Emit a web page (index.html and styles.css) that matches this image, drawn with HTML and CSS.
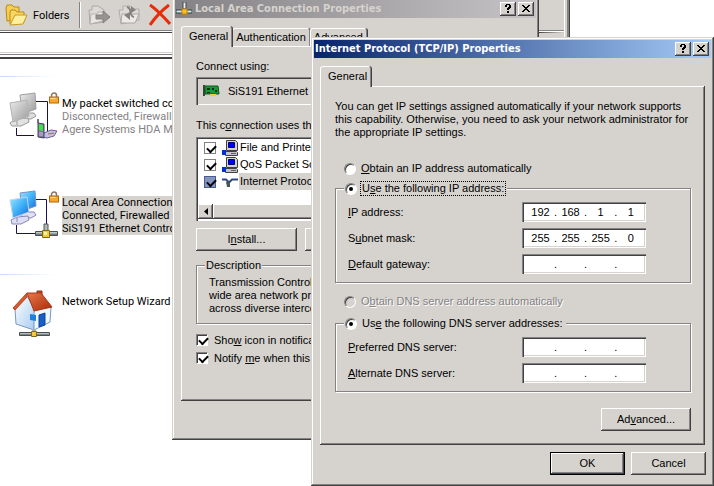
FILE: index.html
```
<!DOCTYPE html>
<html lang="en">
	<head>
		<meta charset="UTF-8">
		<meta name="viewport" content="width=device-width, initial-scale=1.0">
		<title>Network Connections</title>
		<link rel="stylesheet" href="styles.css">
	</head>
	<body>
		<svg class="defs" aria-hidden="true">
			<defs>
				<linearGradient id="screen" x1="0" y1="0" x2="1" y2="1">
					<stop offset="0" stop-color="#9be4ff"/>
					<stop offset=".5" stop-color="#3fb2f8"/>
					<stop offset="1" stop-color="#1467dc"/>
				</linearGradient>
				<linearGradient id="screen-off" x1="0" y1="0" x2="1" y2="1">
					<stop offset="0" stop-color="#ececec"/>
					<stop offset="1" stop-color="#9a9a9a"/>
				</linearGradient>
				<linearGradient id="pipe" x1="0" y1="0" x2="0" y2="1">
					<stop offset="0" stop-color="#e8eef0"/>
					<stop offset="1" stop-color="#4a5456"/>
				</linearGradient>
				<linearGradient id="roof" x1="0" y1="0" x2="1" y2="1">
					<stop offset="0" stop-color="#e87848"/>
					<stop offset="1" stop-color="#a82808"/>
				</linearGradient>
				<linearGradient id="wall" x1="0" y1="0" x2="1" y2="1">
					<stop offset="0" stop-color="#ffffff"/>
					<stop offset="1" stop-color="#a8ccf0"/>
				</linearGradient>
				<symbol id="padlock" viewBox="0 0 10 12">
					<path d="M2.500 6V3.500a2.500 2.500 0 0 1 5 0V6" fill="none" stroke="#8a7a60" stroke-width="1.500"/>
					<rect x=".5" y="5" width="9" height="6" fill="#f8a830" stroke="#b06810"/>
					<path d="M1.500 6.500h5" stroke="#ffe0a0"/>
				</symbol>
				<symbol id="computer" viewBox="0 0 16 16">
					<path d="M4.500 .5h9l2 2v8h-11z" fill="#d6d3ce" stroke="#404040"/>
					<path d="M6.500 2.500h6v5h-6z" fill="#0000f8" stroke="#000080"/>
					<path d="M3.500 11.500h11l1 1v3h-12z" fill="#c6c3c6" stroke="#404040"/>
					<path d="M9 13.500h5" stroke="#606060"/>
					<path d="M0 10h4v5H0z" fill="#0030d0"/>
				</symbol>
				<symbol id="help" viewBox="0 0 6 9">
					<path d="M1 0h4v1h1v3H5v1H4v1H2V4h1V3h1V1H2v2H0V1h1zM2 7h2v2H2z"/>
				</symbol>
				<symbol id="close" viewBox="0 0 8 7">
					<path d="M0 0h2v1h1v1h2V1h1V0h2v1H7v1H6v1H5v1h1v1h1v1h1v1H6V6H5V5H3v1H2v1H0V6h1V5h1V4h1V3H2V2H1V1H0z"/>
				</symbol>
			</defs>
		</svg>

		<div class="explorer">
			<div class="toolbar">
				<button class="tool" type="button">
					<svg width="23" height="22" viewBox="0 0 23 22">
						<path d="M1 4l1-3h5l2 2h5v12L2 17z" fill="#f7cf50" stroke="#b88818"/>
						<path d="M5 8l1-2h4l2 2h7v10L5 20z" fill="#f7d860" stroke="#b88818"/>
						<path d="M10 11h12l-4 9-13 1z" fill="#fff0a0" stroke="#c89820"/>
					</svg>
					Folders
				</button>
				<span class="divider"></span>
				<svg width="23" height="22" viewBox="0 0 23 22">
					<path d="M1 6h3V2h6l6 4v12l-14 2z" fill="#dcdad6" stroke="#aaa8a4"/>
					<path d="M3 10h6l1-2h7l-2 9-13 3z" fill="#e8e6e2" stroke="#b4b2ae"/>
					<path d="M8 11h7V7l7 6-7 6v-4H8z" fill="#969490" stroke="#84827e"/>
				</svg>
				<svg width="24" height="22" viewBox="0 0 24 22">
					<path d="M1 6h4V2h7l3 3h6v11l-18 4z" fill="#dcdad6" stroke="#b0aeaa"/>
					<path d="M4 10h17l-4 9H3z" fill="#eceae6" stroke="#aaa8a4"/>
					<path d="M9 3c6 1 1 9 7 10" fill="none" stroke="#84827e" stroke-width="2"/>
					<path d="M13 2l5 4-5 3zM12 8l-6 3 6 5z" fill="#84827e"/>
				</svg>
				<svg width="22" height="22" viewBox="0 0 22 22">
					<path d="M1 1c6 4 12 10 20 19" fill="none" stroke="#e82c08" stroke-width="3"/>
					<path d="M20 1C12 7 7 12 1 21" fill="none" stroke="#e82c08" stroke-width="3"/>
				</svg>
			</div>
			<div class="address"></div>
			<div class="connections">
				<div class="heading-rule"></div>
				<div class="connection">
					<svg width="48" height="48" viewBox="0 0 48 48">
						<path d="M35 9.500h12.500V39M16.500 36v7.500H34" fill="none" stroke="#201040"/>
						<path d="M20 25l5-4h9l2 3-5 3h-9z" fill="#dedede" stroke="#989898"/>
						<path d="M20 3L35 1l1 16-14 5z" fill="url(#screen-off)" stroke="#a0a0a0"/>
						<path d="M17 29v4M10 31l6-4 12-1 1 4-8 4H12z" fill="#e2e2e2" stroke="#989898"/>
						<path d="M10 11l17-3 2 16-16 6z" fill="url(#screen-off)" stroke="#b4b4b4"/>
						<path d="M44 41l7-3 6 1-3 5-7 2-6-1z" fill="#c4c0e4" stroke="#68609c"/>
						<path d="M48 42l6-1" stroke="#e05040"/>
						<path d="M38 27v4l6 1v14l-6-1z" fill="#807898" stroke="#484068"/>
						<path d="M39 32l4 1v6l-4-1z" fill="#38e838"/>
						<path d="M39 41h4M39 43h4" stroke="#c8c8e0"/>
					</svg>
					<svg class="lock" width="10" height="12"><use href="#padlock"/></svg>
					<p class="offline"><b>My packet switched connection</b><br>Disconnected, Firewalled<br>Agere Systems HDA Modem</p>
				</div>
				<div class="connection">
					<svg width="48" height="48" viewBox="0 0 48 48">
						<path d="M36 8.500h10.500V33M16.500 34v8.500H35" fill="none" stroke="#181060"/>
						<path d="M21 24l5-3h8l2 3-5 3h-9z" fill="#e0e0f8" stroke="#8888b8"/>
						<path d="M20 2L35 0l1 15-14 5z" fill="url(#screen)" stroke="#7890c8"/>
						<path d="M17 26v5M11 29l6-3 11-1 1 4-8 4H12z" fill="#dcdcf4" stroke="#8888b8"/>
						<path d="M10 9l17-3 2 15-16 6z" fill="url(#screen)" stroke="#c8d4f4"/>
						<path d="M44 33h4v7h-4z" fill="#b0b8b8" stroke="#505858"/>
						<path d="M35.500 40.500h22v4h-22z" fill="url(#pipe)" stroke="#485050"/>
						<path d="M42.500 39.500h7v7h-7z" fill="#f8c838" stroke="#806818"/>
						<path d="M44 41h3v3h-3z" fill="#fff4a0"/>
					</svg>
					<svg class="lock" width="10" height="12"><use href="#padlock"/></svg>
					<p class="selected">Local Area Connection<br>Connected, Firewalled<br>SiS191 Ethernet Controller</p>
				</div>
				<div class="heading-rule second"></div>
				<div class="connection wizard">
					<svg width="48" height="48" viewBox="0 0 48 48">
						<path d="M37 1h5v14h-5z" fill="#c04828" stroke="#903018"/>
						<path d="M15 19l12-13 8 14-1 20-18-6z" fill="url(#wall)" stroke="#7898c0"/>
						<path d="M34 19l17-2-1 15-16 8z" fill="#f0f8ff" stroke="#7898c0"/>
						<path d="M27 3h14l11 14-18 4z" fill="url(#roof)" stroke="#a83818"/>
						<path d="M27 3L13 18l2 2L27 7z" fill="#d85830" stroke="#b84820"/>
						<path d="M39 25l6-2v12l-6 2z" fill="#1860c8" stroke="#0c409c"/>
						<path d="M30 24l6 1v6l-6-1z" fill="#2080e0"/>
						<path d="M32 39h4v4h-4z" fill="#a8b0b0"/>
						<path d="M19.500 42.500h30v3h-30z" fill="url(#pipe)" stroke="#485050"/>
						<path d="M31.500 41.500h5v5h-5z" fill="#f8c838" stroke="#806818"/>
					</svg>
					<p>Network Setup Wizard</p>
				</div>
			</div>
		</div>

		<section class="window lan">
			<header class="titlebar inactive">
				<svg width="16" height="14" viewBox="0 0 16 14">
					<path d="M7 0h3v7H7z" fill="#e8eef0" stroke="#404848"/>
					<path d="M0 8h16v3H0z" fill="#d0ecf0" stroke="#304040"/>
					<path d="M6 7h5v5H6z" fill="#f8c020" stroke="#c88000"/>
				</svg>
				<h2>Local Area Connection Properties</h2>
				<button class="caption" type="button" aria-label="Help"><svg width="6" height="9"><use href="#help"/></svg></button>
				<button class="caption" type="button" aria-label="Close"><svg width="8" height="7"><use href="#close"/></svg></button>
			</header>
			<nav class="tabs">
				<button class="tab active" type="button">General</button>
				<button class="tab" type="button">Authentication</button>
				<button class="tab" type="button">Advanced</button>
			</nav>
			<div class="page">
				<p>Connect using:</p>
				<div class="adapter">
					<svg width="17" height="12" viewBox="0 0 17 12">
						<path d="M1 0v11" stroke="#404040" stroke-width="2"/>
						<path d="M2 1h13l1 8H2z" fill="#189838" stroke="#085818"/>
						<path d="M4 3h3v2H4zM9 3h2v2H9zM4 7h3v1H4zM12 5h2v2h-2z" fill="#042c0c"/>
						<path d="M7 9h6v2H7z" fill="#f0d020"/>
					</svg>
					SiS191 Ethernet Controller
				</div>
				<p>This c<u>o</u>nnection uses the following items:</p>
				<div class="items">
					<label class="item"><input type="checkbox" checked><svg width="16" height="16"><use href="#computer"/></svg><span>File and Printer Sharing</span></label>
					<label class="item"><input type="checkbox" checked><svg width="16" height="16"><use href="#computer"/></svg><span>QoS Packet Scheduler</span></label>
					<label class="item current"><input type="checkbox" checked><svg width="16" height="16" viewBox="0 0 16 16"><path d="M0 5.500h4l3 3 3-3h6" fill="none" stroke="#304878" stroke-width="2"/><path d="M0 4.500h3M10 4.500h6" stroke="#90a8d8"/><path d="M4 8h4v5H5z" fill="#485850"/></svg><span>Internet Protocol (TCP/IP)</span></label>
					<div class="scrollbar">
						<button type="button" aria-label="Scroll left"><svg width="4" height="7" viewBox="0 0 4 7"><path d="M4 0v7L0 3.500z"/></svg></button>
						<span class="thumb"></span>
					</div>
				</div>
				<div class="actions">
					<button class="btn" type="button">I<u>n</u>stall...</button>
					<button class="btn" type="button"><u>U</u>ninstall</button>
					<button class="btn" type="button">P<u>r</u>operties</button>
				</div>
				<fieldset class="description">
					<legend>Description</legend>
					Transmission Control Protocol/Internet Protocol. The default<br>wide area network protocol that provides communication<br>across diverse interconnected networks.
				</fieldset>
				<label class="check"><input type="checkbox" checked><span>Sho<u>w</u> icon in notification area when connected</span></label>
				<label class="check"><input type="checkbox" checked><span>Notify <u>m</u>e when this connection has limited or no connectivity</span></label>
			</div>
		</section>

		<section class="window tcpip">
			<header class="titlebar">
				<h2>Internet Protocol (TCP/IP) Properties</h2>
				<button class="caption" type="button" aria-label="Help"><svg width="6" height="9"><use href="#help"/></svg></button>
				<button class="caption" type="button" aria-label="Close"><svg width="8" height="7"><use href="#close"/></svg></button>
			</header>
			<nav class="tabs">
				<button class="tab active" type="button">General</button>
			</nav>
			<form class="page">
				<p class="intro">You can get IP settings assigned automatically if your network supports<br>this capability. Otherwise, you need to ask your network administrator for<br>the appropriate IP settings.</p>

				<label class="radio"><input type="radio" name="ip"><span><u>O</u>btain an IP address automatically</span></label>
				<fieldset>
					<legend><label class="radio focused"><input type="radio" name="ip" checked><span>U<u>s</u>e the following IP address:</span></label></legend>
					<div class="row">
						<label for="ip1"><u>I</u>P address:</label>
						<div class="octets"><input id="ip1" value="192">.<input aria-label="IP 2" value="168">.<input aria-label="IP 3" value="1">.<input aria-label="IP 4" value="1"></div>
					</div>
					<div class="row">
						<label for="mask1">S<u>u</u>bnet mask:</label>
						<div class="octets"><input id="mask1" value="255">.<input aria-label="Mask 2" value="255">.<input aria-label="Mask 3" value="255">.<input aria-label="Mask 4" value="0"></div>
					</div>
					<div class="row">
						<label for="gate1"><u>D</u>efault gateway:</label>
						<div class="octets"><input id="gate1">.<input aria-label="Gateway 2">.<input aria-label="Gateway 3">.<input aria-label="Gateway 4"></div>
					</div>
				</fieldset>

				<label class="radio disabled"><input type="radio" name="dns" disabled><span>O<u>b</u>tain DNS server address automatically</span></label>
				<fieldset>
					<legend><label class="radio"><input type="radio" name="dns" checked><span>Us<u>e</u> the following DNS server addresses:</span></label></legend>
					<div class="row">
						<label for="pref1"><u>P</u>referred DNS server:</label>
						<div class="octets"><input id="pref1">.<input aria-label="Preferred 2">.<input aria-label="Preferred 3">.<input aria-label="Preferred 4"></div>
					</div>
					<div class="row">
						<label for="alt1"><u>A</u>lternate DNS server:</label>
						<div class="octets"><input id="alt1">.<input aria-label="Alternate 2">.<input aria-label="Alternate 3">.<input aria-label="Alternate 4"></div>
					</div>
				</fieldset>
				<div class="more"><button class="btn" type="button">Ad<u>v</u>anced...</button></div>
			</form>
			<footer>
				<button class="btn default" type="button">OK</button>
				<button class="btn" type="button">Cancel</button>
			</footer>
		</section>
	</body>
</html>
```
FILE: styles.css
```
* {
	box-sizing: border-box;
}

body {
	position: relative;
	min-height: 100vh;
	margin: 0;
	overflow: hidden;
	background: #fff;
	color: #000;
	font: 11px/13px "Liberation Sans", Arial, sans-serif;
}

h2, p, fieldset, legend {
	margin: 0;
	padding: 0;
}

button, input {
	margin: 0;
	padding: 0;
	font: inherit;
	color: inherit;
}

svg {
	display: block;
	flex: none;
}

u {
	text-underline-offset: 1px;
}

.defs {
	position: absolute;
	width: 0;
	height: 0;
}

/* explorer window in the back */

.explorer {
	width: 80%;
	max-width: 570px;
	min-height: 100vh;
	padding-right: 6px;
	background: #fff;
	box-shadow: inset -1px 0 #424142, inset -3px 0 #848284, inset -5px 0 #d6d3ce;
	font-family: Roboto, Tahoma, sans-serif;
}

.toolbar {
	display: flex;
	align-items: center;
	gap: 7px;
	height: 31px;
	padding: 0 5px;
	background: #d6d3ce;
	border-bottom: 1px solid #848284;
}

.tool {
	display: flex;
	align-items: center;
	gap: 5px;
	border: 0;
	background: none;
}

.divider {
	width: 2px;
	height: 26px;
	margin-left: 3px;
	border-left: 1px solid #848284;
	border-right: 1px solid #fff;
}

.address {
	height: 27px;
	margin-top: 1px;
	border-top: 1px solid #424142;
	border-right: 26px solid #d6d3ce;
	border-bottom: 2px solid #424142;
	box-shadow: inset 0 -2px #fff, inset 0 -3px #848284, inset 0 -4px #fff, inset 0 -5px #d6d3ce;
}

.connections {
	padding-top: 17px;
}

.heading-rule {
	width: 55px;
	height: 1px;
	background: linear-gradient(to right, #c6dcfc, #fff);
}

.heading-rule.second {
	margin-top: 34px;
}

.connection {
	display: flex;
	position: relative;
	height: 64px;
	padding-top: 15px;
}

.connection > svg:first-child {
	overflow: visible;
}

.connection p {
	height: 39px;
	margin: 5px 0 0 14px;
	white-space: nowrap;
}

.connection b {
	font-weight: normal;
	color: #000;
}

.connection .lock {
	position: absolute;
	top: 15px;
	left: 49px;
}

.connection + .connection {
	margin-top: 35px;
}

.offline {
	color: #848284;
}

.selected {
	background: #d6d3ce;
}

/* dialogs */

.window {
	position: absolute;
	display: flex;
	flex-direction: column;
	padding: 3px;
	background: #d6d3ce;
	box-shadow: inset -1px -1px #424142, inset 1px 1px #d6d3ce, inset -2px -2px #848284, inset 2px 2px #fff;
}

.lan {
	top: -3px;
	left: 172px;
	width: 367px;
	height: 443px;
}

.tcpip {
	top: 37px;
	left: 311px;
	width: 403px;
}

.titlebar {
	display: flex;
	align-items: center;
	height: 18px;
	padding: 0 2px 0 1px;
	background: linear-gradient(to right, #08246b, #a5cbf7);
	color: #fff;
}

.titlebar.inactive {
	background: linear-gradient(to right, #848284, #c6c3c6);
	color: #d6d3ce;
}

.titlebar h2 {
	flex: 1;
	font: bold 11px/14px "DejaVu Sans Condensed", Tahoma, sans-serif;
	white-space: nowrap;
}

.inactive h2 {
	margin-left: 3px;
}

.caption {
	display: flex;
	align-items: center;
	justify-content: center;
	width: 16px;
	height: 14px;
	padding: 0 1px 1px 0;
	border: 0;
	background: #d6d3ce;
	box-shadow: inset -1px -1px #424142, inset 1px 1px #fff, inset -2px -2px #848284;
	color: #000;
}

.caption + .caption {
	margin-left: 2px;
}

.tabs {
	display: flex;
	align-items: flex-end;
	height: 28px;
	padding: 0 6px;
}

.tab {
	height: 18px;
	padding: 0 3px;
	border: 1px solid #fff;
	border-right: 1px solid #848284;
	border-bottom: 0;
	border-radius: 3px 3px 0 0;
	background: #d6d3ce;
	box-shadow: 1px 0 #424142;
}

.tab.active {
	z-index: 1;
	height: 21px;
	margin-bottom: -1px;
	padding: 0 3px 1px 7px;
}

.page {
	margin: 0 6px;
	box-shadow: inset -1px -1px #424142, inset 1px 1px #fff, inset -2px -2px #848284;
}

/* local area connection */

.lan .page {
	height: 355px;
	padding: 14px 15px;
	white-space: nowrap;
}

.adapter {
	display: flex;
	align-items: center;
	gap: 8px;
	height: 28px;
	margin: 4px 0 14px;
	padding: 0 7px;
	box-shadow: inset 1px 1px #848284, inset 2px 2px #424142, inset -1px -1px #fff;
}

.items {
	height: 84px;
	margin-top: 5px;
	padding: 2px;
	background: #fff;
	box-shadow: inset 1px 1px #848284, inset 2px 2px #424142, inset -1px -1px #fff;
}

.item {
	display: flex;
	align-items: center;
	height: 17px;
	padding-left: 6px;
}

.item svg {
	margin: 0 1px 0 6px;
}

.item span {
	flex: 1;
	padding: 2px 1px;
}

.current span {
	background: #d6d3ce;
}

input[type=checkbox] {
	flex: none;
	width: 12px;
	height: 12px;
	appearance: none;
	border: 1px solid #848284;
	background: #fff;
}

input[type=checkbox]:checked::before {
	content: "";
	display: block;
	width: 7px;
	height: 4px;
	margin: 2px 0 0 2px;
	border: solid #000;
	border-width: 0 0 2px 2px;
	transform: rotate(-45deg);
}

.current input[type=checkbox] {
	background: #8494bc;
	border-color: #4a5c8c;
}

.scrollbar {
	display: flex;
	height: 15px;
	margin-top: 14px;
}

.scrollbar button, .thumb {
	display: flex;
	align-items: center;
	justify-content: center;
	width: 15px;
	border: 0;
	background: #d6d3ce;
	box-shadow: inset -1px -1px #424142, inset 1px 1px #fff, inset -2px -2px #848284;
}

.thumb {
	flex: 1;
}

.actions {
	display: flex;
	gap: 8px;
	margin: 7px 0 8px;
}

.btn {
	height: 23px;
	border: 0;
	background: #d6d3ce;
	box-shadow: inset -1px -1px #424142, inset 1px 1px #fff, inset -2px -2px #848284;
}

.actions .btn {
	width: 101px;
}

fieldset {
	min-width: 0;
	border: 1px solid #848284;
	box-shadow: 1px 1px #fff, inset 1px 1px #fff;
}

legend {
	margin-left: -4px;
	padding: 0 1px;
	background: #d6d3ce;
}

.description {
	height: 65px;
	margin-bottom: 7px;
	padding: 4px 0 0 12px;
}

.check {
	display: flex;
	align-items: center;
	gap: 6px;
	height: 18px;
}

.check input[type=checkbox] {
	border-color: #848284 #fff #fff #848284;
	box-shadow: inset 1px 1px #424142;
}

/* tcp/ip properties */

.tcpip .page {
	padding: 14px 14px 14px 15px;
}

.intro {
	margin-bottom: 22px;
	white-space: nowrap;
}

.radio {
	display: flex;
	align-items: center;
	gap: 3px;
	height: 15px;
}

.page > .radio {
	margin: 0 0 5px 9px;
}

.page > .disabled {
	margin-bottom: 7px;
}

.radio span {
	padding: 1px 2px;
}

.focused span {
	outline: 1px dotted #000;
	outline-offset: -1px;
}

.disabled {
	color: #848284;
	text-shadow: 1px 1px #fff;
}

input[type=radio] {
	flex: none;
	width: 12px;
	height: 12px;
	appearance: none;
	border: 1px solid;
	border-color: #848284 #fff #fff #848284;
	border-radius: 50%;
	background: #fff;
	box-shadow: inset 1px 1px #424142;
}

input[type=radio]:checked::before {
	content: "";
	display: block;
	width: 4px;
	height: 4px;
	margin: 3px;
	border-radius: 50%;
	background: #000;
}

input[type=radio]:disabled {
	background: #d6d3ce;
}

.tcpip fieldset {
	margin-bottom: 11px;
	padding: 6px 44px 8px 12px;
}

.row {
	display: flex;
	align-items: center;
	justify-content: space-between;
	height: 20px;
}

.row + .row {
	margin-top: 6px;
}

.octets {
	display: flex;
	align-items: center;
	width: 124px;
	height: 20px;
	padding: 0 2px 0 5px;
	background: #fff;
	box-shadow: inset 1px 1px #848284, inset 2px 2px #424142, inset -1px -1px #fff, inset -2px -2px #d6d3ce;
}

.octets input {
	width: 27px;
	border: 0;
	background: none;
	text-align: center;
}

.more {
	display: flex;
	justify-content: flex-end;
	margin-top: 16px;
}

.more .btn {
	width: 90px;
}

footer {
	display: flex;
	justify-content: flex-end;
	gap: 6px;
	padding: 7px 5px 8px;
}

footer .btn {
	width: 75px;
}

.default {
	border: 1px solid #000;
}
```
